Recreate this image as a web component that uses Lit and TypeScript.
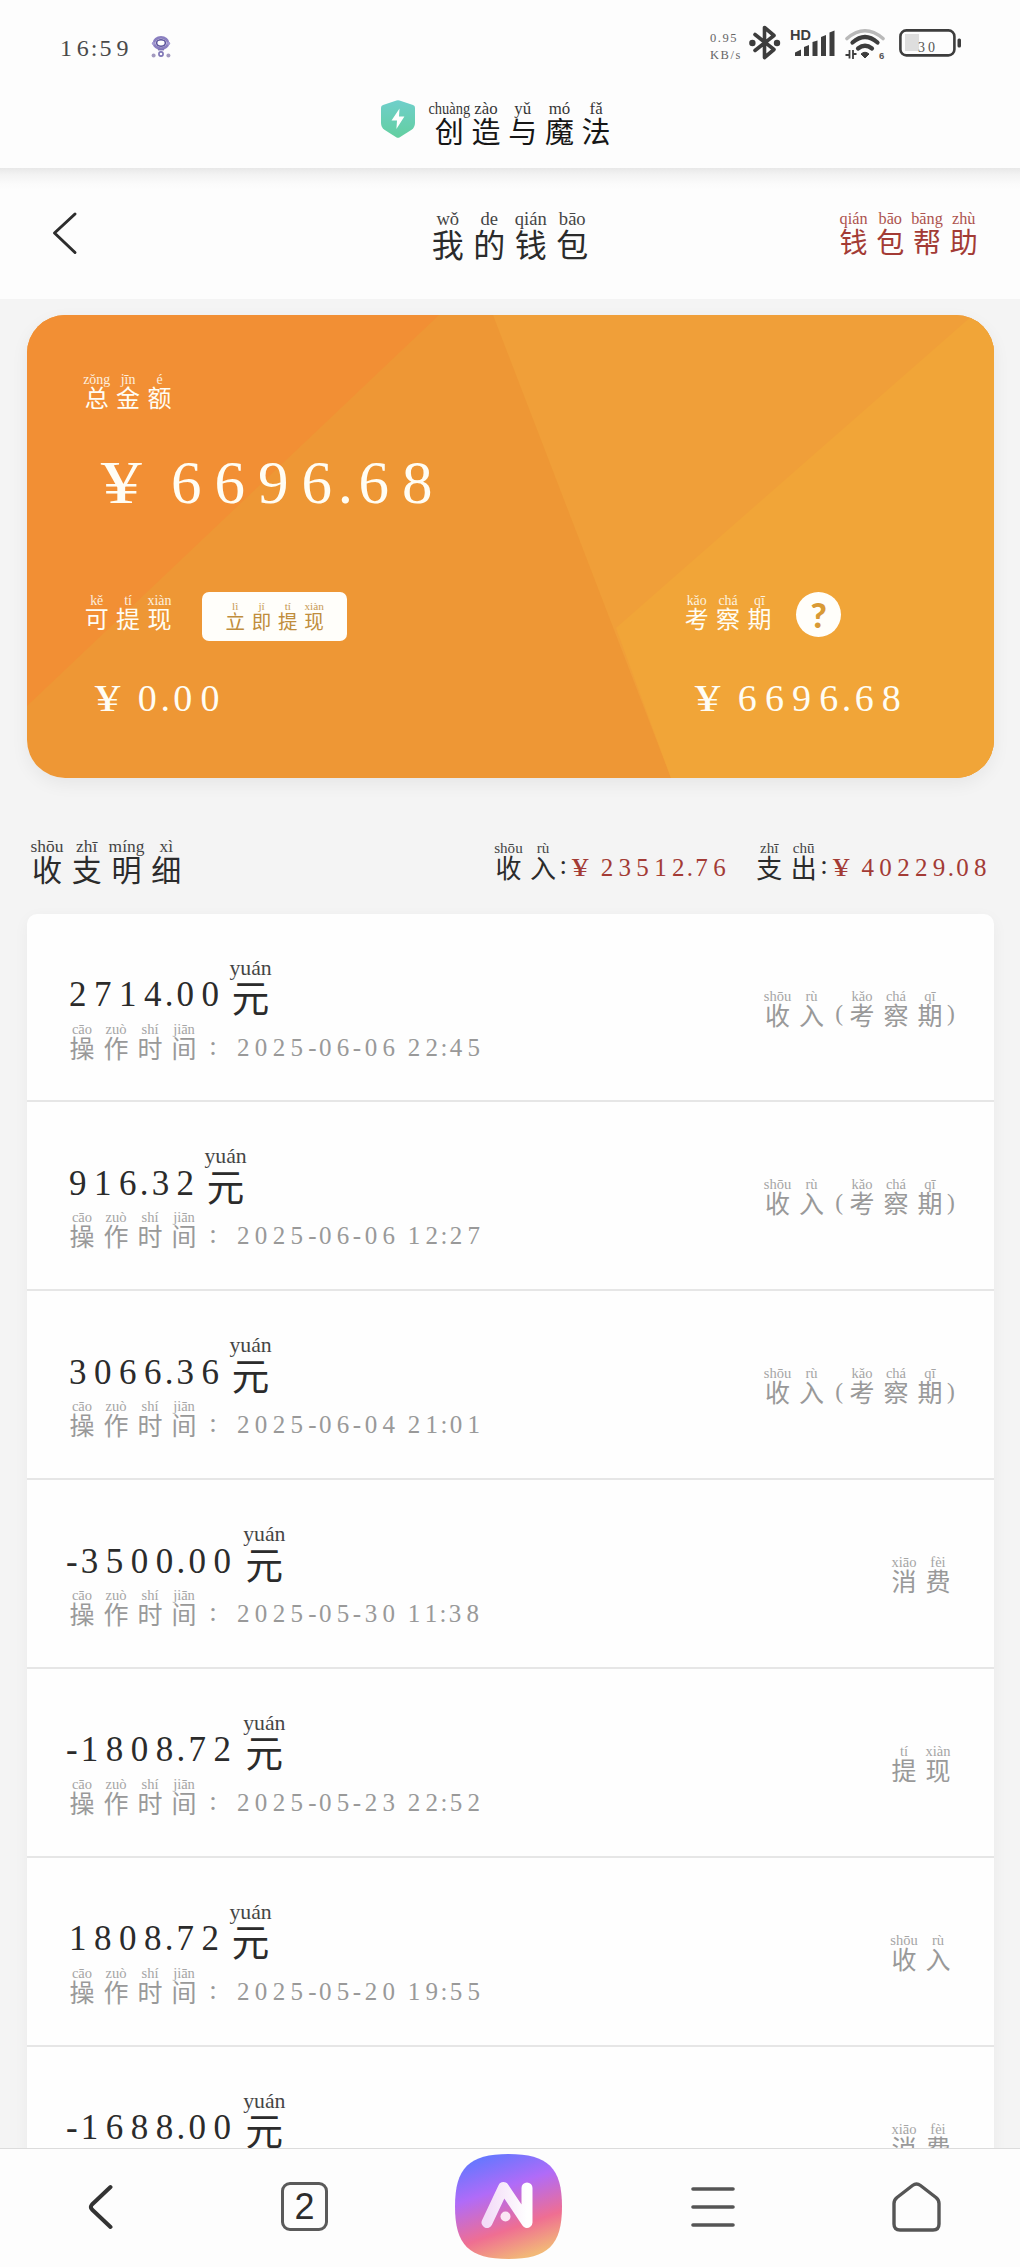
import { LitElement, html, css, svg, type TemplateResult } from "lit";
import { customElement, property } from "lit/decorators.js";

const PINYIN: Record<string, string> = {
  创: "chuàng", 造: "zào", 与: "yǔ", 魔: "mó", 法: "fǎ",
  我: "wǒ", 的: "de", 钱: "qián", 包: "bāo", 帮: "bāng", 助: "zhù",
  总: "zǒng", 金: "jīn", 额: "é", 可: "kě", 提: "tí", 现: "xiàn",
  立: "lì", 即: "jí", 考: "kǎo", 察: "chá", 期: "qī",
  收: "shōu", 支: "zhī", 明: "míng", 细: "xì", 入: "rù", 出: "chū",
  元: "yuán", 操: "cāo", 作: "zuò", 时: "shí", 间: "jiān",
  消: "xiāo", 费: "fèi",
};

interface Entry {
  amount: string;
  time: string;
  kind: string;
}

const ENTRIES: Entry[] = [
  { amount: "2714.00", time: "2025-06-06 22:45", kind: "收入(考察期)" },
  { amount: "916.32", time: "2025-06-06 12:27", kind: "收入(考察期)" },
  { amount: "3066.36", time: "2025-06-04 21:01", kind: "收入(考察期)" },
  { amount: "-3500.00", time: "2025-05-30 11:38", kind: "消费" },
  { amount: "-1808.72", time: "2025-05-23 22:52", kind: "提现" },
  { amount: "1808.72", time: "2025-05-20 19:55", kind: "收入" },
  { amount: "-1688.00", time: "", kind: "消费" },
];

/** Hanzi with pinyin above each character. --s is the glyph size, --p the pitch. */
@customElement("pinyin-text")
export class PinyinText extends LitElement {
  static styles = css`
    :host {
      display: inline-flex;
      flex: none;
      height: calc(var(--s) * 1.52);
      white-space: nowrap;
    }
    .cell {
      width: var(--p);
      display: flex;
      flex-direction: column;
      align-items: center;
    }
    .py {
      font: calc(var(--s) * 0.58) / calc(var(--s) * 0.57) "Liberation Serif", serif;
      height: calc(var(--s) * 0.52);
      opacity: 0.88;
    }
    .py.tight {
      transform: scaleX(0.86);
    }
    .hz {
      font: calc(var(--s) * 1) / calc(var(--s) * 1) "Noto Sans CJK SC", sans-serif;
      height: var(--s);
    }
    .mark {
      font: calc(var(--s) * 0.94) / calc(var(--s) * 1) "Liberation Serif", serif;
      margin-top: calc(var(--s) * 0.5);
      text-align: center;
    }
    .open {
      width: calc(var(--s) * 0.58);
      padding-right: calc(var(--s) * 0.08);
      text-align: right;
    }
    .close {
      width: calc(var(--s) * 0.32);
      text-align: left;
    }
  `;

  @property() text = "";

  render() {
    return [...this.text].map((ch) => {
      const py = PINYIN[ch];
      if (!py) return html`<span class="mark ${ch === "(" ? "open" : "close"}">${ch}</span>`;
      return html`<span class="cell"
        ><span class="py ${py.length > 5 ? "tight" : ""}">${py}</span><span class="hz">${ch}</span></span
      >`;
    });
  }
}

/** Widely spaced serif figures; punctuation sits centred in a narrow gap. */
@customElement("spaced-number")
export class SpacedNumber extends LitElement {
  static styles = css`
    :host {
      display: inline-block;
      flex: none;
      font-family: "Liberation Serif", serif;
      line-height: 1;
      letter-spacing: 0.213em;
      white-space: pre;
    }
    .dot {
      margin-left: -0.12em;
      letter-spacing: 0.09em;
    }
    .dash {
      margin-left: -0.07em;
      letter-spacing: 0.14em;
    }
    .dash:first-child {
      margin-left: 0;
      letter-spacing: 0.09em;
    }
    .gap {
      letter-spacing: 0.05em;
    }
    .yen {
      display: inline-block;
      letter-spacing: 0;
      width: 0.5em;
      margin: 0 0.56em 0 0.12em;
      transform: scaleX(1.35);
    }
  `;

  @property() text = "";

  render() {
    const cls: Record<string, string> = { ".": "dot", ":": "dot", "-": "dash", " ": "gap", "¥": "yen" };
    return [...this.text].map((ch) => (cls[ch] ? html`<span class=${cls[ch]}>${ch}</span>` : ch));
  }
}

const icon = (cls: string, w: number, h: number, body: TemplateResult) =>
  html`<svg class=${cls} width=${w} height=${h} viewBox="0 0 ${w} ${h}" fill="none">${body}</svg>`;

@customElement("app-root")
export class AppRoot extends LitElement {
  static styles = css`
    * {
      box-sizing: border-box;
    }
    :host {
      display: flex;
      flex-direction: column;
      width: 1020px;
      height: 2267px;
      overflow: hidden;
      background: #f4f4f4;
      color: #2b2b2b;
      font-family: "Liberation Serif", "Noto Sans CJK SC", serif;
    }
    svg {
      display: block;
      flex: none;
    }
    .top {
      height: 168px;
      background: #fdfdfd;
      flex: none;
    }
    .status {
      height: 98px;
      display: flex;
      padding: 25px 58px 0 60px;
      color: #4a4a4a;
    }
    .clock {
      font-size: 24px;
      margin: 11px 18px 0 0;
      letter-spacing: 0.2em;
    }
    .bot {
      margin-top: 11px;
    }
    .net {
      margin: 5px 7px 0 auto;
      font-size: 12.5px;
      line-height: 17px;
      letter-spacing: 1.6px;
      color: #666;
    }
    .signal {
      margin: 3px 0 0 9px;
    }
    .wifi {
      margin: 2px 0 0 10px;
    }
    .battery {
      margin: 4px 0 0 13px;
    }
    .app {
      display: flex;
      padding-left: 381px;
      color: #161616;
    }
    .shield {
      margin-top: 2px;
    }
    .app pinyin-text {
      --s: 29px;
      --p: 36.7px;
      margin: 3px 0 0 16px;
    }
    .nav {
      height: 131px;
      flex: none;
      display: flex;
      padding: 43px 38px 0 52px;
      background: linear-gradient(#e8e8e8, #f3f3f3 7px, #fbfbfb 16px, #fdfdfd 22px);
    }
    .nav .page {
      --s: 32px;
      --p: 41.5px;
      margin: -1px 0 0 349px;
    }
    .nav .help {
      --s: 28px;
      --p: 36.7px;
      margin: 1px 0 0 auto;
      color: #a33b35;
    }
    .scroll {
      flex: 1;
      min-height: 0;
      overflow: hidden;
      padding: 15.500px 26px 0 27px;
    }
    .card {
      display: grid;
      height: 463px;
      border-radius: 38px;
      overflow: hidden;
      color: #fffdf4;
      background: #ee9735;
    }
    .wrap {
      border-radius: 38px;
      box-shadow: 0 6px 18px rgba(0, 0, 0, 0.06);
    }
    .facets,
    .body {
      grid-area: 1 / 1;
    }
    .body {
      padding: 58px 0 0 54px;
      display: flex;
      flex-direction: column;
    }
    .body pinyin-text {
      --s: 24px;
      --p: 31.4px;
    }
    .total {
      font-size: 61px;
      margin: 43px 0 0 18px;
    }
    .cols {
      display: flex;
      margin-top: 79px;
    }
    .col {
      width: 600px;
    }
    .line {
      display: flex;
      height: 49px;
    }
    .line pinyin-text {
      margin-top: 2px;
    }
    .cash {
      display: flex;
      justify-content: center;
      width: 145px;
      height: 49px;
      margin-left: 27px;
      border-radius: 7px;
      background: #fffefa;
      color: #c08d3c;
    }
    .body .cash pinyin-text {
      --s: 19.5px;
      --p: 26.3px;
      margin-top: 9px;
    }
    .ask {
      width: 45px;
      height: 45px;
      margin-left: 21px;
      border-radius: 50%;
      background: #fffefa;
      color: #d99a35;
      font: 900 35px/44px Lato, sans-serif;
      text-align: center;
    }
    .sum {
      font-size: 38px;
      margin: 38px 0 0 12px;
    }
    .heads {
      display: flex;
      height: 136px;
      padding-top: 60px;
    }
    .heads .title {
      --s: 30px;
      --p: 39.8px;
    }
    .heads .tag {
      --s: 26px;
      --p: 34.5px;
      margin-top: 3px;
    }
    .colon {
      font-size: 27px;
      line-height: 25px;
      width: 8px;
      text-align: center;
    }
    .heads .colon {
      margin: 15px 2px 0 -1px;
    }
    .money {
      font-size: 25px;
      margin: 17px 0 0 2px;
      color: #a33b35;
    }
    .in {
      display: flex;
      margin-left: 305px;
    }
    .out {
      display: flex;
      margin-left: 21px;
    }
    .list {
      background: #fefefe;
      border-radius: 10px 10px 0 0;
      box-shadow: 0 4px 16px rgba(0, 0, 0, 0.045);
    }
    .row {
      display: flex;
      justify-content: space-between;
      height: 188.85px;
      padding: 43px 39px 0 38px;
      border-bottom: 2px solid #e6e6e6;
    }
    .amount {
      display: flex;
      height: 65px;
      padding-left: 4px;
    }
    .amount.neg {
      padding-left: 1px;
    }
    .amount spaced-number {
      font-size: 35px;
      margin-top: 20.5px;
    }
    .amount pinyin-text {
      --s: 37.5px;
      --p: 46px;
      margin: 1px 0 0 1px;
    }
    .amount.neg pinyin-text {
      margin-left: 3px;
    }
    .time {
      display: flex;
      color: #999;
    }
    .time pinyin-text {
      --s: 25px;
      --p: 34px;
    }
    .time .colon {
      margin: 12px 20px 0 8px;
    }
    .time spaced-number {
      font-size: 25px;
      margin-top: 13px;
    }
    .kind {
      --s: 25px;
      --p: 34px;
      margin-top: 32px;
      color: #999;
    }
    .tabs {
      flex: none;
      height: 119px;
      display: grid;
      grid-template-columns: repeat(5, 204px);
      justify-items: center;
      align-items: center;
      padding: 0 1px 3px 0;
      margin-left: -1.5px;
      width: 1022px;
      background: #fdfdfd;
      border-top: 1px solid #dcdcdc;
    }
    .count {
      width: 47px;
      height: 49px;
      border: 3px solid #5a5a5a;
      border-radius: 9px;
      font: 36px/43px "Liberation Sans", sans-serif;
      text-align: center;
      color: #2d2d2d;
    }
  `;

  private statusBar() {
    const c = "#3d3d3d";
    return html`<div class="status">
      <spaced-number class="clock" text="16:59"></spaced-number>
      ${icon("bot", 20, 23, svg`
        <ellipse cx="10" cy="7" rx="7" ry="5.6" stroke="#8a7fc0" stroke-width="2.8"/>
        <ellipse cx="10" cy="7" rx="4.4" ry="3.2" stroke="#5d559c" stroke-width="1.6"/>
        <circle cx="2.4" cy="7.4" r="1.6" fill="#a39ad2"/><circle cx="17.6" cy="7.4" r="1.6" fill="#a39ad2"/>
        <path d="M7 13.6h6" stroke="#7d74b5" stroke-width="1.6"/>
        <circle cx="10" cy="18" r="2.1" stroke="#7d74b5" stroke-width="1.6"/>
        <circle cx="2.6" cy="19.4" r="2" fill="#a39abf"/><circle cx="17.4" cy="19.4" r="2" fill="#a39abf"/>` as any)}
      <div class="net">0.95<br />KB/s</div>
      ${icon("bt", 32, 35, svg`
        <path d="M6 9.500 25 24.500 15.500 32.500V2.500L25 10.500 6 25.500" stroke="${c}" stroke-width="3.600" stroke-linejoin="round" stroke-linecap="round"/>
        <circle cx="3.400" cy="18" r="3.200" fill="${c}"/><circle cx="28" cy="18" r="3.200" fill="${c}"/>` as any)}
      ${icon("signal", 45, 29, svg`
        <text x="0" y="11.500" font-family="Liberation Sans" font-weight="700" font-size="14.500" fill="${c}">HD</text>
        <path d="M5 28v-3.500l6-3V28zM14 28v-9l5-2v11zM22.500 28V14l5-1.500V28zM31 28V9l5-2v21zM39.500 28V4.500l5-2V28z" fill="${c}"/>` as any)}
      ${icon("wifi", 41, 33, svg`
        <path d="M2 11.500Q20 -4 38 11.500" stroke="#b9b9b9" stroke-width="3.600" stroke-linecap="round"/>
        <path d="M7.500 15.500q12.500-11 25 0M13 21.500q7-5.500 14 0" stroke="${c}" stroke-width="4.200" stroke-linecap="round"/>
        <path d="M16 27q4-3.500 8 0L20 31z" fill="${c}" stroke="${c}" stroke-linejoin="round"/>
        <path d="M.5 28h4v3.500V23M8 32v-9 4h3.500" stroke="${c}" stroke-width="1.800"/>
        <text x="34" y="32" font-family="Liberation Sans" font-size="9.500" font-weight="700" fill="#555">6</text>` as any)}
      ${icon("battery", 63, 28, svg`
        <rect x="6" y="5" width="14" height="17" fill="#dedede"/>
        <rect x="1.400" y="1.400" width="54" height="25" rx="6" stroke="${c}" stroke-width="2.600"/>
        <rect x="58.500" y="9.500" width="3.500" height="9" rx="1.500" fill="${c}"/>
        <text x="19" y="23" font-family="Liberation Serif" font-size="14" letter-spacing="3" fill="#555">30</text>` as any)}
    </div>`;
  }

  private card() {
    return html`<div class="wrap"><div class="card">
      <svg class="facets" width="967" height="463" viewBox="0 0 967 463">
        <path d="M0 0H412L0 391z" fill="#f28f34" />
        <path d="M466 0H967V463H644z" fill="#f09f39" />
        <path d="M946 0H967V463H644L589 313z" fill="#f1a538" />
      </svg>
      <div class="body">
        <pinyin-text text="总金额"></pinyin-text>
        <spaced-number class="total" text="¥6696.68"></spaced-number>
        <div class="cols">
          <div class="col">
            <div class="line">
              <pinyin-text text="可提现"></pinyin-text>
              <div class="cash"><pinyin-text text="立即提现"></pinyin-text></div>
            </div>
            <spaced-number class="sum" text="¥0.00"></spaced-number>
          </div>
          <div>
            <div class="line">
              <pinyin-text text="考察期"></pinyin-text>
              <div class="ask">?</div>
            </div>
            <spaced-number class="sum" text="¥6696.68"></spaced-number>
          </div>
        </div>
      </div>
    </div></div>`;
  }

  private row(e: Entry) {
    return html`<div class="row">
      <div>
        <div class="amount ${e.amount.startsWith("-") ? "neg" : ""}">
          <spaced-number text=${e.amount}></spaced-number>
          <pinyin-text text="元"></pinyin-text>
        </div>
        ${e.time
          ? html`<div class="time">
              <pinyin-text text="操作时间"></pinyin-text>
              <span class="colon">:</span>
              <spaced-number text=${e.time}></spaced-number>
            </div>`
          : ""}
      </div>
      <pinyin-text class="kind" text=${e.kind}></pinyin-text>
    </div>`;
  }

  render() {
    return html`
      <div class="top">
        ${this.statusBar()}
        <div class="app">
          ${icon("shield", 34, 38, svg`
            <defs><linearGradient id="sh" x1="0" y1="0" x2="0" y2="1">
              <stop offset="0" stop-color="#6fcfcb"/><stop offset="1" stop-color="#63cfa0"/></linearGradient></defs>
            <path d="M15.500 .4q1.500-.5 3 0L32 5q2 .8 2 2.600V23c0 3-1.200 5-3.400 6.800L18.800 37.200q-1.800 1-3.600 0L3.400 29.800C1.200 28 0 26 0 23V7.600Q0 5.800 2 5z" fill="url(#sh)"/>
            <path d="M18.500 8.500 10.500 20.500h5.500l-.6 8.500 8-12.500h-5.400z" fill="#fff"/>` as any)}
          <pinyin-text text="创造与魔法"></pinyin-text>
        </div>
      </div>
      <div class="nav">
        ${icon("chev", 26, 44, svg`<path d="M23 3 2.500 22 23 41.500" stroke="#2d2d2d" stroke-width="3" stroke-linecap="round" stroke-linejoin="round"/>` as any)}
        <pinyin-text class="page" text="我的钱包"></pinyin-text>
        <pinyin-text class="help" text="钱包帮助"></pinyin-text>
      </div>
      <div class="scroll">
        ${this.card()}
        <div class="heads">
          <pinyin-text class="title" text="收支明细"></pinyin-text>
          <div class="in">
            <pinyin-text class="tag" text="收入"></pinyin-text><span class="colon">:</span>
            <spaced-number class="money" text="¥23512.76"></spaced-number>
          </div>
          <div class="out">
            <pinyin-text class="tag" text="支出"></pinyin-text><span class="colon">:</span>
            <spaced-number class="money" text="¥40229.08"></spaced-number>
          </div>
        </div>
        <div class="list">${ENTRIES.map((e) => this.row(e))}</div>
      </div>
      <div class="tabs">
        ${icon("back", 26, 48, svg`<path d="M22.500 4 4 21.500Q1.800 24 4 26.500L22.500 44" stroke="#333" stroke-width="4" stroke-linecap="round" stroke-linejoin="round"/>` as any)}
        <div class="count">2</div>
        ${icon("ai", 107, 105, svg`
          <defs>
            <linearGradient id="bg" x1=".25" y1="0" x2=".6" y2="1">
              <stop offset="0" stop-color="#5f78ff"/><stop offset=".35" stop-color="#b06bf8"/>
              <stop offset=".72" stop-color="#ef6e92"/><stop offset="1" stop-color="#f2b878"/></linearGradient>
            <linearGradient id="st" x1="0" y1="0" x2="1" y2="0">
              <stop offset="0" stop-color="#f3dcf8"/><stop offset="1" stop-color="#fff"/></linearGradient>
          </defs>
          <path d="M53.500 0C93 0 107 14 107 52.500S93 105 53.500 105 0 91 0 52.500 14 0 53.500 0z" fill="url(#bg)"/>
          <path d="M32 68.500 48.500 33.500 72 68.500V34" stroke="url(#st)" stroke-width="11" stroke-linecap="round" stroke-linejoin="round"/>
          <circle cx="50.500" cy="62.500" r="5" fill="#fbe6f4"/>` as any)}
        ${icon("menu", 44, 42, svg`<path d="M2 3h40M2 21h40M2 39h40" stroke="#555" stroke-width="3.600" stroke-linecap="round"/>` as any)}
        ${icon("home", 49, 50, svg`<path d="M20.500 3.500q4-3 8 0L44 15.500q3 2.500 3 6V42q0 6-6 6H8q-6 0-6-6V21.500q0-3.500 3-6z" stroke="#555" stroke-width="3.400" stroke-linejoin="round"/>` as any)}
      </div>
    `;
  }
}
